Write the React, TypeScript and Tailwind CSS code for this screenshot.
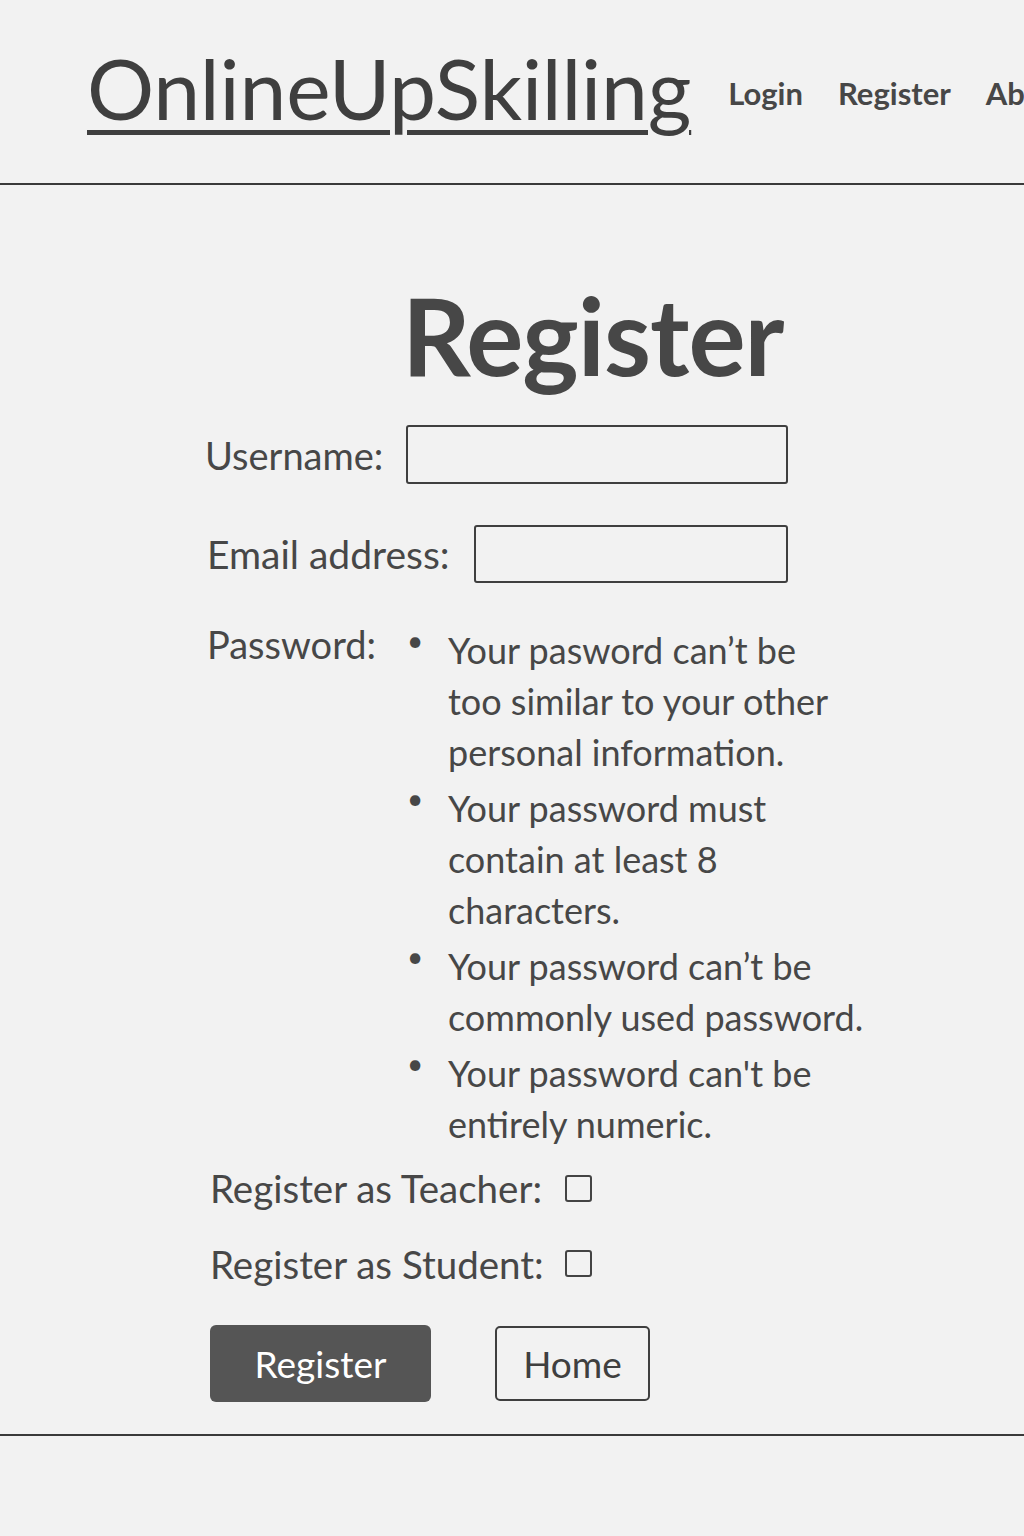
import React from 'react'

const rules: string[][] = [
  ["Your pasword can\u2019t be", 'too similar to your other', 'personal information.'],
  ['Your password must', 'contain at least 8', 'characters.'],
  ["Your password can\u2019t be", 'commonly used password.'],
  ["Your password can't be", 'entirely numeric.'],
]

export default function App() {
  return (
    <div className="min-h-[1536px] w-full overflow-hidden bg-[#f2f2f2] text-[#474747]" style={{ fontFamily: 'Lato, "Open Sans", sans-serif' }}>
      {/* Top bar */}
      <header className="flex h-[185px] items-start gap-[37px] border-b-2 border-[#3a3a3a] pl-[87px] pt-[46px] whitespace-nowrap">
        <a href="#" className="text-[84px] font-normal leading-none tracking-[-0.2px] text-[#3f3f3f] underline decoration-[5px] underline-offset-[10px]">
          OnlineUpSkilling
        </a>
        <nav className="mt-[24px] flex gap-[35px] text-[31px] font-bold text-[#474747]">
          <a href="#">Login</a>
          <a href="#">Register</a>
          <a href="#">About</a>
        </nav>
      </header>

      {/* Register form */}
      <main className="border-b-2 border-[#3a3a3a] pb-[32px]">
        <form className="flex w-[788px] flex-col pl-[205px] pt-[96px]">
          <h1 className="ml-[197px] text-[107px] font-bold leading-none tracking-[-1px] text-[#474747]">Register</h1>

          <div className="mt-[37px] flex items-center gap-[23px]">
            <label className="text-[38px] leading-none">Username:</label>
            <input type="text" className="h-[59px] flex-1 rounded-[3px] border-2 border-[#3f3f3f] bg-transparent" />
          </div>

          <div className="mt-[41px] flex items-center gap-[24px] pl-[2px]">
            <label className="text-[39px] leading-none">Email address:</label>
            <input type="email" className="h-[58px] flex-1 rounded-[3px] border-2 border-[#3f3f3f] bg-transparent" />
          </div>

          <div className="mt-[42px] flex items-start pl-[2px]">
            <label className="w-[200px] shrink-0 text-[38px] leading-none">Password:</label>
            <ul className="mt-0 flex flex-col gap-[5px] whitespace-nowrap text-[36px] leading-[51px]">
              {rules.map((lines, i) => (
                <li key={i} className="flex">
                  <span className="w-[41px] shrink-0 text-[28px] leading-[30px]">•</span>
                  <span>
                    {lines.map((l, j) => (
                      <span key={j} className="block">{l}</span>
                    ))}
                  </span>
                </li>
              ))}
            </ul>
          </div>

          <div className="mt-[19px] flex items-center pl-[5px]">
            <label className="w-[355px] text-[38.5px] leading-none">Register as Teacher:</label>
            <input type="checkbox" className="h-[27px] w-[27px] appearance-none rounded-[3px] border-2 border-[#444] bg-transparent" />
          </div>

          <div className="mt-[37px] flex items-center pl-[5px]">
            <label className="w-[355px] text-[38.5px] leading-none">Register as Student:</label>
            <input type="checkbox" className="h-[27px] w-[27px] appearance-none rounded-[3px] border-2 border-[#444] bg-transparent" />
          </div>

          <div className="mt-[42px] flex items-center gap-[64px] pl-[5px]">
            <button type="button" className="h-[77px] w-[221px] rounded-[6px] bg-[#555555] text-[37px] text-white">Register</button>
            <button type="button" className="h-[75px] w-[155px] rounded-[5px] border-2 border-[#3f3f3f] text-[37px] text-[#3f3f3f]">Home</button>
          </div>
        </form>
      </main>
    </div>
  )
}
